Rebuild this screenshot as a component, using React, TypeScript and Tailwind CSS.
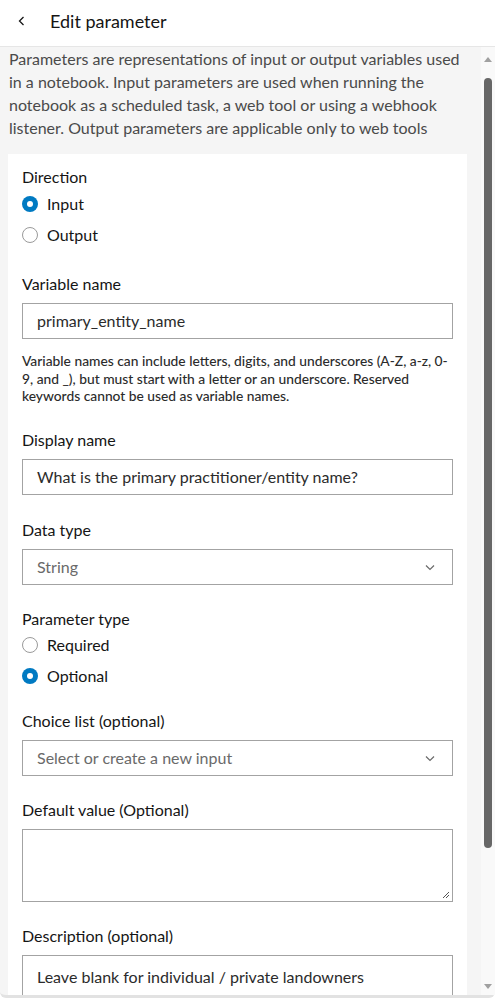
import React from "react";

const font = { fontFamily: "Lato, 'Noto Sans', sans-serif" };

function Radio({ checked, label }: { checked: boolean; label: string }) {
  return (
    <div className="flex items-center h-[31px]">
      {checked ? (
        <span className="w-4 h-4 rounded-full bg-[#007ac2] flex items-center justify-center">
          <span className="w-[6px] h-[6px] rounded-full bg-white" />
        </span>
      ) : (
        <span className="w-4 h-4 rounded-full border border-[#9a9a9a] bg-white" />
      )}
      <span className="ml-[9px] text-[16px] text-[#151515]">{label}</span>
    </div>
  );
}

function Label({ children }: { children: React.ReactNode }) {
  return <div className="text-[16px] leading-[22px] text-[#151515] mb-[8px]">{children}</div>;
}

function TextBox({ value }: { value: string }) {
  return (
    <div className="h-[36px] border border-[#a3a3a3] bg-white flex items-center px-[14px] text-[16px] text-[#2b2b2b]">
      {value}
    </div>
  );
}

function Select({ value }: { value: string }) {
  return (
    <div className="h-[36px] border border-[#a3a3a3] bg-white flex items-center justify-between pl-[14px] pr-[16px] text-[16px] text-[#6a6a6a]">
      <span>{value}</span>
      <svg width="12" height="12" viewBox="0 0 12 12" fill="none">
        <path d="M2 4.5 L6 8.5 L10 4.5" stroke="#6a6a6a" strokeWidth="1.2" />
      </svg>
    </div>
  );
}

export default function App() {
  return (
    <div className="w-[495px] h-[998px] flex flex-col bg-white overflow-hidden" style={font}>
      {/* header */}
      <div className="h-[47px] shrink-0 flex items-center pb-[5px] border-b border-[#e6e6e6] bg-white">
        <svg className="ml-[17px]" width="10" height="12" viewBox="0 0 10 12" fill="none">
          <path d="M6.5 2 L2.5 6 L6.5 10" stroke="#151515" strokeWidth="1.3" />
        </svg>
        <span className="ml-[23px] text-[18px] leading-[24px] text-[#151515]">Edit parameter</span>
      </div>

      <div className="flex-1 min-h-0 flex bg-[#f5f5f5] rounded-b-[6px] border-b-[3px] border-[#e2e2e2]">
        <div className="flex-1 min-w-0 overflow-hidden pl-2 pr-[14px]">
          <p className="text-[16px] leading-[23px] text-[#4a4a4a] pl-px">
            Parameters are representations of input or output variables used in a notebook. Input parameters are used when running the notebook as a scheduled task, a web tool or using a webhook listener. Output parameters are applicable only to web tools
          </p>

          <div className="mt-[15px] bg-white px-[14px] pt-[12px] pb-4">
            <Label>Direction</Label>
            <div className="-mt-[8px]">
              <Radio checked label="Input" />
              <Radio checked={false} label="Output" />
            </div>

            <div className="mt-[23px]">
              <Label>Variable name</Label>
              <TextBox value="primary_entity_name" />
              <p className="mt-[13px] text-[13.8px] leading-[17.5px] text-[#2b2b2b] font-medium">
                Variable names can include letters, digits, and underscores (A-Z, a-z, 0-
                <br />
                9, and _), but must start with a letter or an underscore. Reserved
                <br />
                keywords cannot be used as variable names.
              </p>
            </div>

            <div className="mt-[24px]">
              <Label>Display name</Label>
              <TextBox value="What is the primary practitioner/entity name?" />
            </div>

            <div className="mt-[24px]">
              <Label>Data type</Label>
              <Select value="String" />
            </div>

            <div className="mt-[23px]">
              <Label>Parameter type</Label>
              <div className="-mt-[8px]">
                <Radio checked={false} label="Required" />
                <Radio checked label="Optional" />
              </div>
            </div>

            <div className="mt-[18px]">
              <Label>Choice list (optional)</Label>
              <Select value="Select or create a new input" />
            </div>

            <div className="mt-[23px]">
              <Label>Default value (Optional)</Label>
              <div className="relative h-[73px] border border-[#a3a3a3] bg-white">
                <svg className="absolute right-[2px] bottom-[2px]" width="8" height="8" viewBox="0 0 8 8">
                  <path d="M7 1 L1 7 M7 4 L4 7" stroke="#555" strokeWidth="1" />
                </svg>
              </div>
            </div>

            <div className="mt-[23px]">
              <Label>Description (optional)</Label>
              <div className="h-[44px] border border-[#a3a3a3] bg-white flex items-center px-[14px] text-[16px] text-[#2b2b2b]">
                Leave blank for individual / private landowners
              </div>
            </div>
          </div>
        </div>

        {/* scrollbar */}
        <div className="w-[14px] shrink-0 bg-[#f9f9f9] flex flex-col items-center">
          <svg className="mt-[10px]" width="8" height="5" viewBox="0 0 8 5">
            <path d="M0 5 L4 0 L8 5 Z" fill="#a0a0a0" />
          </svg>
          <div className="mt-[16px] w-[8px] h-[770px] rounded-[4px] bg-[#676767]" />
          <div className="flex-1" />
          <svg className="mb-[6px]" width="8" height="5" viewBox="0 0 8 5">
            <path d="M0 0 L4 5 L8 0 Z" fill="#a0a0a0" />
          </svg>
        </div>
      </div>
    </div>
  );
}
